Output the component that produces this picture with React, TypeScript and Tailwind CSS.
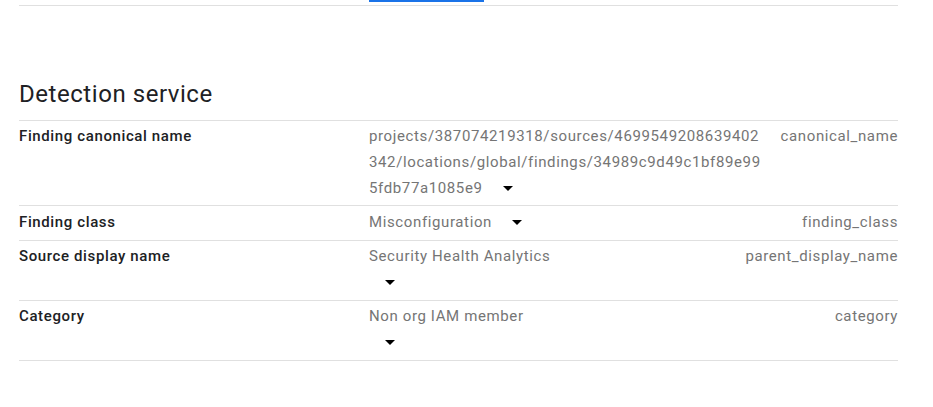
import React from 'react';

type Row = {
  label: string;
  lines: string[];
  // where the dropdown arrow sits: after the last line, or on its own line
  arrow: 'inline' | 'below';
  field: string;
  pad: string;
};

const rows: Row[] = [
  {
    label: 'Finding canonical name',
    lines: [
      'projects/387074219318/sources/4699549208639402',
      '342/locations/global/findings/34989c9d49c1bf89e99',
      '5fdb77a1085e9',
    ],
    arrow: 'inline',
    field: 'canonical_name',
    pad: 'pt-[2px] pb-[4px]',
  },
  { label: 'Finding class', lines: ['Misconfiguration'], arrow: 'inline', field: 'finding_class', pad: 'pt-[3px] pb-[5px]' },
  { label: 'Source display name', lines: ['Security Health Analytics'], arrow: 'below', field: 'parent_display_name', pad: 'pt-[2px] pb-[5px]' },
  { label: 'Category', lines: ['Non org IAM member'], arrow: 'below', field: 'category', pad: 'pt-[2px] pb-[5px]' },
];

function DropArrow({ className = '' }: { className?: string }) {
  return (
    <svg width="24" height="24" viewBox="0 0 24 24" className={`inline-block align-middle ${className}`}>
      <path d="M7 10l5 5 5-5z" fill="#000" />
    </svg>
  );
}

export default function App() {
  return (
    <div className="w-[933px] h-[407px] bg-white overflow-hidden" style={{ fontFamily: 'Roboto, "Liberation Sans", sans-serif' }}>
      <div className="mx-[19px] w-[879px]">
        {/* top edge of previous section */}
        <div className="ml-[350px] w-[115px] h-[2px] bg-[#1a73e8]" />
        <div className="mt-[3px] border-t border-[#e0e0e0]" />

        <h2 className="mt-[72px] mb-[10px] text-[24px] leading-[32px] tracking-[0.55px] font-normal text-[#202124]">Detection service</h2>

        <div>
          {rows.map((row, i) => (
            <div
              key={row.field}
              className={`flex border-t border-[#e0e0e0] text-[15px] leading-[26px] tracking-[0.62px] ${row.pad} ${i === rows.length - 1 ? 'border-b' : ''}`}
            >
              <div className="w-[350px] shrink-0 font-medium text-[#202124]">{row.label}</div>
              <div className="flex-1 text-[#757575]">
                {row.lines.map((line, j) => (
                  <div key={j} className="whitespace-nowrap h-[26px]">
                    {line}
                    {row.arrow === 'inline' && j === row.lines.length - 1 && <DropArrow className="ml-[13px] -mt-[2px]" />}
                  </div>
                ))}
                {row.arrow === 'below' && (
                  <div className="h-[26px] flex items-center">
                    <DropArrow className="ml-[9px]" />
                  </div>
                )}
              </div>
              <div className="shrink-0 text-right text-[#757575] pl-4">{row.field}</div>
            </div>
          ))}
        </div>
      </div>
    </div>
  );
}
